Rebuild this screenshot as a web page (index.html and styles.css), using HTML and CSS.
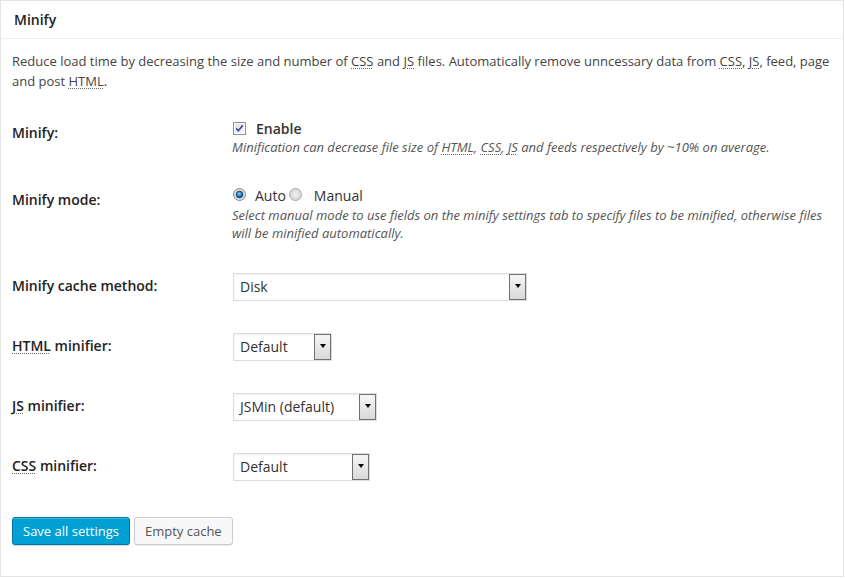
FILE: index.html
```html
<!DOCTYPE html>
<html lang="en">
<head>
<meta charset="utf-8">
<title>Minify</title>
<link rel="stylesheet" href="styles.css">
</head>
<body>
<div class="postbox">
  <h3 class="hndle">Minify</h3>
  <div class="inside">
    <p class="intro">Reduce load time by decreasing the size and number of <abbr title="Cascading Style Sheet">CSS</abbr> and <abbr title="JavaScript">JS</abbr> files. Automatically remove unncessary data from <abbr title="Cascading Style Sheet">CSS</abbr>, <abbr title="JavaScript">JS</abbr>, feed, page and post <abbr title="Hypertext Markup Language">HTML</abbr>.</p>

    <div class="form-table">
      <div class="row">
        <div class="th">Minify:</div>
        <div class="td">
          <div class="line line-check">
            <svg class="checkbox" width="13" height="13" viewBox="0 0 13 13">
              <defs>
                <linearGradient id="cbg" x1="0" y1="0" x2="1" y2="1">
                  <stop offset="0" stop-color="#dcdee6"/>
                  <stop offset="1" stop-color="#f7f7fa"/>
                </linearGradient>
              </defs>
              <rect x="0.5" y="0.5" width="12" height="12" fill="#fff" stroke="#8e8f8f"/>
              <rect x="2" y="2" width="9" height="9" fill="url(#cbg)"/>
              <path d="M3.2 6.4 L5.3 8.8 L9.8 3.4" fill="none" stroke="#3f4f94" stroke-width="1.7"/>
            </svg>
            <strong class="opt-label">Enable</strong>
          </div>
          <div class="description">Minification can decrease file size of <abbr title="Hypertext Markup Language">HTML</abbr>, <abbr title="Cascading Style Sheet">CSS</abbr>, <abbr title="JavaScript">JS</abbr> and feeds respectively by ~10% on average.</div>
        </div>
      </div>

      <div class="row row-mode">
        <div class="th">Minify mode:</div>
        <div class="td">
          <div class="line line-radio">
            <svg class="radio radio-first" width="13" height="13" viewBox="0 0 13 13">
              <defs>
                <radialGradient id="rbg" cx="0.5" cy="0.5" r="0.5">
                  <stop offset="0" stop-color="#fafafa"/>
                  <stop offset="1" stop-color="#d8d8d8"/>
                </radialGradient>
                <radialGradient id="rdot" cx="0.45" cy="0.4" r="0.6">
                  <stop offset="0" stop-color="#8ad6ff"/>
                  <stop offset="0.6" stop-color="#1a78c0"/>
                  <stop offset="1" stop-color="#0c3f6e"/>
                </radialGradient>
              </defs>
              <circle cx="6.5" cy="6.5" r="6" fill="url(#rbg)" stroke="#8a8a8a"/>
              <circle cx="6.5" cy="6.5" r="3.4" fill="url(#rdot)" stroke="#1d4a73" stroke-width="0.8"/>
            </svg>
            <span class="opt-text">Auto</span>
            <svg class="radio radio-second" width="13" height="13" viewBox="0 0 13 13">
              <defs>
                <radialGradient id="rbg2" cx="0.5" cy="0.5" r="0.5">
                  <stop offset="0" stop-color="#f2f2f2"/>
                  <stop offset="1" stop-color="#d4d4d4"/>
                </radialGradient>
              </defs>
              <circle cx="6.5" cy="6.5" r="6" fill="url(#rbg2)" stroke="#a9a9a9"/>
            </svg>
            <span class="opt-text">Manual</span>
          </div>
          <div class="description">Select manual mode to use fields on the minify settings tab to specify files to be minified, otherwise files will be minified automatically.</div>
        </div>
      </div>

      <div class="row">
        <div class="th">Minify cache method:</div>
        <div class="td">
          <div class="select select-cache"><span class="select-value">Disk</span><span class="select-arrow"><span class="tri"></span></span></div>
        </div>
      </div>

      <div class="row">
        <div class="th"><abbr title="Hypertext Markup Language">HTML</abbr> minifier:</div>
        <div class="td">
          <div class="select select-html"><span class="select-value">Default</span><span class="select-arrow"><span class="tri"></span></span></div>
        </div>
      </div>

      <div class="row">
        <div class="th"><abbr title="JavaScript">JS</abbr> minifier:</div>
        <div class="td">
          <div class="select select-js"><span class="select-value">JSMin (default)</span><span class="select-arrow"><span class="tri"></span></span></div>
        </div>
      </div>

      <div class="row">
        <div class="th"><abbr title="Cascading Style Sheet">CSS</abbr> minifier:</div>
        <div class="td">
          <div class="select select-css"><span class="select-value">Default</span><span class="select-arrow"><span class="tri"></span></span></div>
        </div>
      </div>
    </div>

    <div class="submit">
      <button class="button button-primary" type="button">Save all settings</button>
      <button class="button button-secondary" type="button">Empty cache</button>
    </div>
  </div>
</div>
</body>
</html>
```

FILE: styles.css
```css
html, body {
  margin: 0;
  padding: 0;
  background: #fff;
}

body {
  font-family: "Open Sans", "Liberation Sans", sans-serif;
  font-size: 13px;
  color: #444;
}

.postbox {
  box-sizing: border-box;
  width: 844px;
  height: 577px;
  border: 1px solid #e5e5e5;
  box-shadow: 0 1px 1px rgba(0, 0, 0, 0.04);
  background: #fff;
}

.hndle {
  margin: 0;
  padding: 9px 13px;
  font-size: 14px;
  line-height: 19px;
  font-weight: 600;
  color: #222;
  border-bottom: 1px solid #eee;
}

.inside {
  padding: 0 11px;
  margin-top: 13px;
}

.intro {
  margin: 0;
  line-height: 19.5px;
}

abbr {
  text-decoration-line: underline;
  text-decoration-style: dotted;
  text-decoration-color: #666;
  text-decoration-thickness: 1px;
  text-underline-offset: 2px;
}

.form-table {
  margin-top: 13px;
}

.row {
  display: grid;
  grid-template-columns: 210px 1fr;
}

.th {
  padding: 20px 10px 20px 0;
  font-size: 14px;
  line-height: 18.2px;
  font-weight: 600;
  color: #222;
}

.td {
  padding: 15px 0 15px 10px;
  font-size: 14px;
  line-height: 18.2px;
}

.row-mode .td {
  padding-bottom: 14px;
}

.line {
  display: flex;
  align-items: center;
}

.line-check {
  height: 19px;
  line-height: 19px;
}

.line-radio {
  height: 20px;
  line-height: 20px;
}

.checkbox {
  flex: none;
  margin: 0 10px 0 1px;
}

.opt-label {
  font-weight: 600;
  color: #333;
}

.radio {
  flex: none;
  margin-bottom: 3px;
}

.radio-first {
  margin-left: 1px;
  margin-right: 9px;
}

.radio-second {
  margin-left: 3px;
  margin-right: 12px;
}

.opt-text {
  color: #333;
}

.description {
  font-size: 13px;
  font-style: italic;
  color: #555;
}

.select {
  box-sizing: border-box;
  display: flex;
  align-items: stretch;
  justify-content: space-between;
  height: 28px;
  margin: 1px 0 1px 1px;
  border: 1px solid #ddd;
  background: #fff;
  box-shadow: inset 0 1px 2px rgba(0, 0, 0, 0.07);
  font-size: 14px;
  color: #333;
}

.select-cache { width: 294px; }
.select-html { width: 99px; }
.select-js { width: 144px; }
.select-css { width: 137px; }

.select-value {
  padding-left: 6px;
  line-height: 26px;
  white-space: nowrap;
}

.select-arrow {
  box-sizing: border-box;
  flex: none;
  width: 17px;
  display: flex;
  align-items: center;
  justify-content: center;
  border: 1px solid #707070;
  background: linear-gradient(#f6f6f6, #d9d9d9);
}

.tri {
  width: 0;
  height: 0;
  margin-bottom: 2px;
  border-left: 3.5px solid transparent;
  border-right: 3.5px solid transparent;
  border-top: 4px solid #000;
}

.submit {
  display: flex;
  gap: 4px;
  margin-top: 20px;
}

.button {
  box-sizing: border-box;
  height: 28px;
  margin: 0;
  padding: 0 10px 1px;
  line-height: 26px;
  font-family: inherit;
  font-size: 13px;
  border: 1px solid;
  border-radius: 3px;
  cursor: pointer;
}

.button-primary {
  background: #00a0d2;
  border-color: #0073aa;
  color: #fff;
  box-shadow: inset 0 1px 0 rgba(120, 200, 230, 0.5), 0 1px 0 rgba(0, 0, 0, 0.15);
}

.button-secondary {
  background: #f7f7f7;
  border-color: #ccc;
  color: #555;
  box-shadow: inset 0 1px 0 #fff, 0 1px 0 rgba(0, 0, 0, 0.08);
}
```
